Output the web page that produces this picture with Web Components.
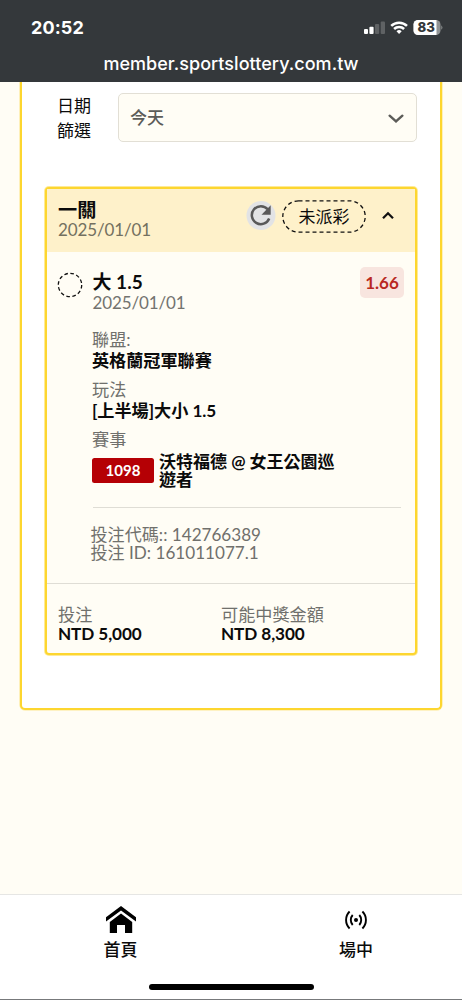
<!DOCTYPE html>
<html lang="zh-Hant">
<head>
<meta charset="utf-8">
<title>投注紀錄</title>
<style>
html,body{margin:0;height:1000px;overflow:hidden;background:#fffdf5}
body{font-family:Lato,"Noto Sans CJK TC",sans-serif;color:#0b0b0b}
</style>
</head>
<body>
<app-page></app-page>
<script>
const define = (name, html) => {
  const tpl = document.createElement('template');
  tpl.innerHTML = html;
  customElements.define(name, class extends HTMLElement {
    constructor() {
      super();
      this.attachShadow({mode: 'open'}).appendChild(tpl.content.cloneNode(true));
    }
  });
};

define('status-bar', `
<style>
:host{display:block;height:82px;background:#34383b;color:#fff;font-family:Inter,sans-serif;flex:none}
.row{display:flex;height:54px;align-items:center;padding:2px 19.5px 0 31px;box-sizing:border-box}
.time{font-weight:700;font-size:18px;letter-spacing:.1px;flex:1;line-height:20px}
.icons{display:block}
.url{text-align:center;font-size:18px;font-weight:500;line-height:20px;letter-spacing:.04px}
</style>
<div class="row"><span class="time">20:52</span>
<svg class="icons" width="79" height="18" viewBox="0 0 79 18">
<g fill="#fff"><rect x="0" y="10" width="4" height="5" rx="1"/><rect x="5.4" y="7.8" width="4.2" height="7.2" rx="1"/></g>
<g fill="#5f6264"><rect x="11" y="5" width="4.2" height="10" rx="1"/><rect x="16.7" y="2.4" width="4.3" height="12.6" rx="1"/></g>
<g fill="none" stroke="#fff" stroke-width="2.5"><path d="M27.2 6.9a11.2 11.2 0 0 1 15.8 0"/><path d="M30.1 10a7.1 7.1 0 0 1 10 0"/></g>
<path fill="#fff" d="M32.5 12.2a3.8 3.8 0 0 1 5.2 0l-2.6 2.9z"/>
<defs><clipPath id="c"><rect x="49.5" y="1" width="27" height="15" rx="4.5"/></clipPath></defs>
<g clip-path="url(#c)"><rect x="49" y="1" width="28" height="15" fill="#909394"/><rect x="49" y="1" width="23.5" height="15" fill="#fff"/></g>
<path d="M77.3 6.2q2.2 2.3 0 4.6z" fill="#909394"/>
<text x="62.3" y="13.2" text-anchor="middle" font-size="13.2" font-weight="800" fill="#34383b" font-family="Inter">83</text>
</svg></div>
<div class="url">member.sportslottery.com.tw</div>`);

define('date-filter', `
<style>
:host{display:flex;height:49px;width:373px}
.label{width:74px;font-size:17px;line-height:25px;padding-left:13px;box-sizing:border-box;margin-top:-.5px}
.label span{display:block;width:36px}
.select{flex:1;box-sizing:border-box;border:1px solid #e2dfd5;border-radius:5px;background:#fffdf5;display:flex;align-items:center;justify-content:space-between;padding:0 11px;color:#5c5c58;font-size:17px;font-weight:500}
.select span{margin-top:-2px}
svg{display:block}
</style>
<div class="label"><span>日期篩選</span></div>
<div class="select"><span><slot></slot></span>
<svg width="18" height="12" viewBox="0 0 18 12"><path d="M2.6 3.7 9 9.5l6.4-5.8" fill="none" stroke="#5c5c58" stroke-width="2.4" stroke-linecap="round"/></svg></div>`);

define('label-pair', `
<style>
:host{display:block;font-size:17.15px}
.l{color:#70706c;line-height:20px;height:20px}
.v{font-weight:700;line-height:20px;color:#0b0b0b;margin-top:var(--pair-gap,1px);letter-spacing:var(--value-spacing,0)}
</style>
<div class="l"><slot name="label"></slot></div><div class="v"><slot></slot></div>`);

define('ticket-head', `
<style>
:host{display:flex;box-sizing:border-box;height:63px;background:#fef1ca;padding:11px 20px 0 11px}
.t{flex:1}
.name{font-size:19.2px;font-weight:700;line-height:20px}
.date{font-size:17px;line-height:20px;color:#73705f;letter-spacing:-.13px}
.tools{display:flex;align-items:center;height:34px;margin-top:-1px}
svg{display:block}
.state{position:relative;width:84px;height:33px;margin:0 15px 0 6px;font-size:17px;display:grid;place-items:center}
.state svg{position:absolute;inset:0}
.state span{margin-top:-2px}
</style>
<div class="t"><div class="name"><slot></slot></div><div class="date"><slot name="date"></slot></div></div>
<div class="tools">
<svg width="30" height="30" viewBox="0 0 30 30"><circle cx="15" cy="14.500" r="14.500" fill="#e2e3e5"/><path d="M21.700 8.300A9 9 0 1 0 23.200 17.500" fill="none" stroke="#595959" stroke-width="2.500"/><path d="M24.700 4.300v9.400h-9.200z" fill="#595959"/></svg>
<div class="state"><svg width="84" height="33"><rect x=".8" y=".8" width="82.400" height="31.400" rx="15.700" fill="none" stroke="#111" stroke-width="1.300" stroke-dasharray="4 3"/></svg><span>未派彩</span></div>
<svg width="14" height="10" viewBox="0 0 14 10"><path d="M2 7.300 7 2.200l5 5.100" fill="none" stroke="#111" stroke-width="2.200"/></svg>
</div>`);

define('bet-selection', `
<style>
:host{display:flex;height:332px;box-sizing:border-box;padding:15px 11px 0;border-bottom:1px solid #dfddd5}
.dot{display:block;width:26px;height:26px;margin:5px 9.5px 0 -1px;flex:none}
.body{flex:1}
.top{display:flex;justify-content:space-between;height:63px}
.name{font-size:19px;font-weight:700;line-height:20px;margin-top:5px}
.date{font-size:17px;line-height:20px;color:#73736f;letter-spacing:-.13px;margin-top:1px}
.odds{width:44px;height:31px;border-radius:5px;background:#f8e5df;color:#b9281f;font-weight:700;font-size:17px;line-height:32px;text-align:center}
label-pair{height:50.2px;margin-left:-.5px;--value-spacing:-.03px}
.match{display:flex;margin-top:-28px;font-size:17px;font-weight:700;line-height:18.5px}
.no{width:62px;height:25px;margin:5px 5px 0 -.5px;border-radius:2.5px;background:#b50005;color:#fff;font-size:15px;line-height:25px;text-align:center;flex:none}
.teams{width:180px}
.ids{margin-top:17.5px;margin-right:3px;border-top:1px solid #dfddd5;padding-top:17.5px;font-size:17.1px;line-height:18.5px;color:#70706c}
.ids div{margin-left:-2px}
</style>
<svg class="dot" viewBox="0 0 26 26"><circle cx="13" cy="13" r="11.700" fill="none" stroke="#111" stroke-width="1.300" stroke-dasharray="3.600 2.525"/></svg>
<div class="body">
<div class="top"><div><div class="name">大 1.5</div><div class="date">2025/01/01</div></div><div class="odds">1.66</div></div>
<label-pair><span slot="label">聯盟:</span>英格蘭冠軍聯賽</label-pair>
<label-pair><span slot="label">玩法</span>[上半場]大小 1.5</label-pair>
<label-pair><span slot="label">賽事</span></label-pair>
<div class="match"><span class="no">1098</span><span class="teams">沃特福德 @ 女王公園巡遊者</span></div>
<div class="ids"><div>投注代碼:: 142766389</div><div>投注 ID: 161011077.1</div></div>
</div>`);

define('ticket-card', `
<style>
:host{display:block;box-sizing:border-box;width:372px;height:468px;margin-left:1px;border:2px solid #fdd62f;box-shadow:0 0 0 1px rgba(253,214,47,.5);border-radius:4px;background:#fffdf5}
.foot{display:flex;padding:21px 11px 0;--pair-gap:-1px;--value-spacing:-.1px}
.foot label-pair{width:163px}
</style>
<ticket-head>一關<span slot="date">2025/01/01</span></ticket-head>
<bet-selection></bet-selection>
<div class="foot"><label-pair><span slot="label">投注</span>NTD 5,000</label-pair><label-pair><span slot="label">可能中獎金額</span>NTD 8,300</label-pair></div>`);

define('bottom-nav', `
<style>
:host{display:grid;grid-template:70px 1fr / 1fr 1fr;height:106px;box-sizing:border-box;background:#fff;border-top:1px solid #e6e6e4;border-bottom:1px solid #77797b;flex:none;font-size:17px;font-weight:500}
.item{display:flex;flex-direction:column;align-items:center;width:72px}
.home{margin-left:84.5px}
.live{margin-left:89px}
svg{display:block;height:30px;margin-top:10px}
span{line-height:20px;margin-top:5px}
.bar{grid-column:1/3;width:165px;height:6px;border-radius:3px;background:#000;margin:19px auto 0}
</style>
<div class="item home"><svg width="32" height="30" viewBox="0 0 32 30"><g fill="#000"><path d="M16 1 31 12.200v4.400L16 5.500 1 16.600v-4.400z"/><path d="M16 8.600 27.200 17v11H20v-8h-8v8H4.800V17z"/></g></svg><span>首頁</span></div>
<div class="item live"><svg width="24" height="30" viewBox="0 0 24 30"><circle cx="12" cy="15" r="2"/><g fill="none" stroke="#000" stroke-width="1.900"><path d="M8.700 10a7.500 7.500 0 0 0 0 10M15.300 10a7.500 7.500 0 0 1 0 10M5.600 6.500a12 12 0 0 0 0 17M18.400 6.500a12 12 0 0 1 0 17"/></g></svg><span>場中</span></div>
<div class="bar"></div>`);

define('app-page', `
<style>
:host{display:flex;flex-direction:column;height:1000px;width:462px;background:#fffdf5}
main{flex:1}
.panel{box-sizing:border-box;width:422px;height:628px;margin-left:20px;border:2px solid #fdd62f;box-shadow:0 0 0 .6px rgba(253,214,47,.5);border-top:0;border-radius:0 0 5px 5px;background:#fff;padding:11px 22px 0}
date-filter{margin:0 0 45px}
status-bar{position:relative}
</style>
<status-bar></status-bar>
<main><div class="panel"><date-filter>今天</date-filter><ticket-card></ticket-card></div></main>
<bottom-nav></bottom-nav>`);
</script>
</body>
</html>
